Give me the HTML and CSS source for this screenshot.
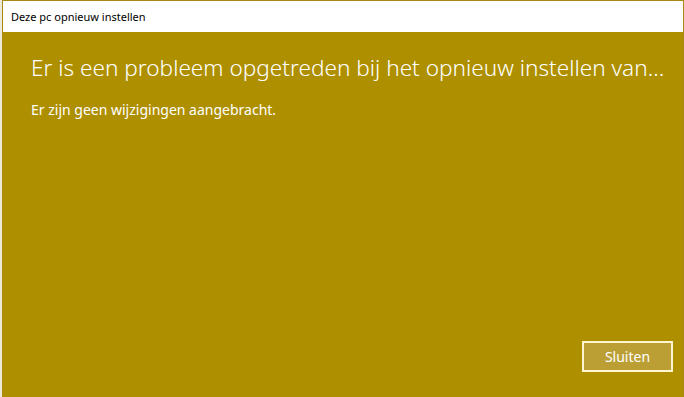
FILE: index.html
```html
<!DOCTYPE html>
<html lang="nl">
<head>
  <meta charset="UTF-8" />
  <title>Deze pc opnieuw instellen</title>
  <link rel="stylesheet" href="styles.css">
</head>
<body>
  <div class="window">
    <div class="title-bar">Deze pc opnieuw instellen</div>
    <div class="content">
      <h1>Er is een probleem opgetreden bij het opnieuw instellen van...</h1>
      <p>Er zijn geen wijzigingen aangebracht.</p>
      <div class="actions">
        <button class="close-button">Sluiten</button>
      </div>
    </div>
  </div>
</body>
</html>
```

FILE: styles.css
```css
body {
  margin: 0;
  height: 397px;
  overflow: hidden;
  background-color: #ece9d8;
  font-family: "Noto Sans", "Open Sans", sans-serif;
}

.window {
  margin-left: 2px;
  height: 397px;
  display: flex;
  flex-direction: column;
  border: 1px solid #a88a10;
  border-bottom: none;
  box-sizing: border-box;
  background-color: #ae8f00;
}

.title-bar {
  height: 31px;
  flex: 0 0 auto;
  background-color: white;
  color: #000;
  font-size: 11px;
  line-height: 32px;
  padding-left: 8px;
}

.content {
  flex: 1;
  display: flex;
  flex-direction: column;
  padding: 20px 10px 25px 28px;
  color: white;
}

.content h1 {
  margin: 0;
  font-size: 22.6px;
  font-weight: 300;
  line-height: 32px;
  white-space: nowrap;
}

.content p {
  margin: 16px 0 0;
  font-size: 14px;
}

.actions {
  margin-top: auto;
  display: flex;
  justify-content: flex-end;
}

.close-button {
  width: 91px;
  height: 31px;
  background-color: #bb9f35;
  border: 2px solid #fff6cf;
  color: white;
  font-family: inherit;
  font-size: 14px;
  padding: 0;
}
```
